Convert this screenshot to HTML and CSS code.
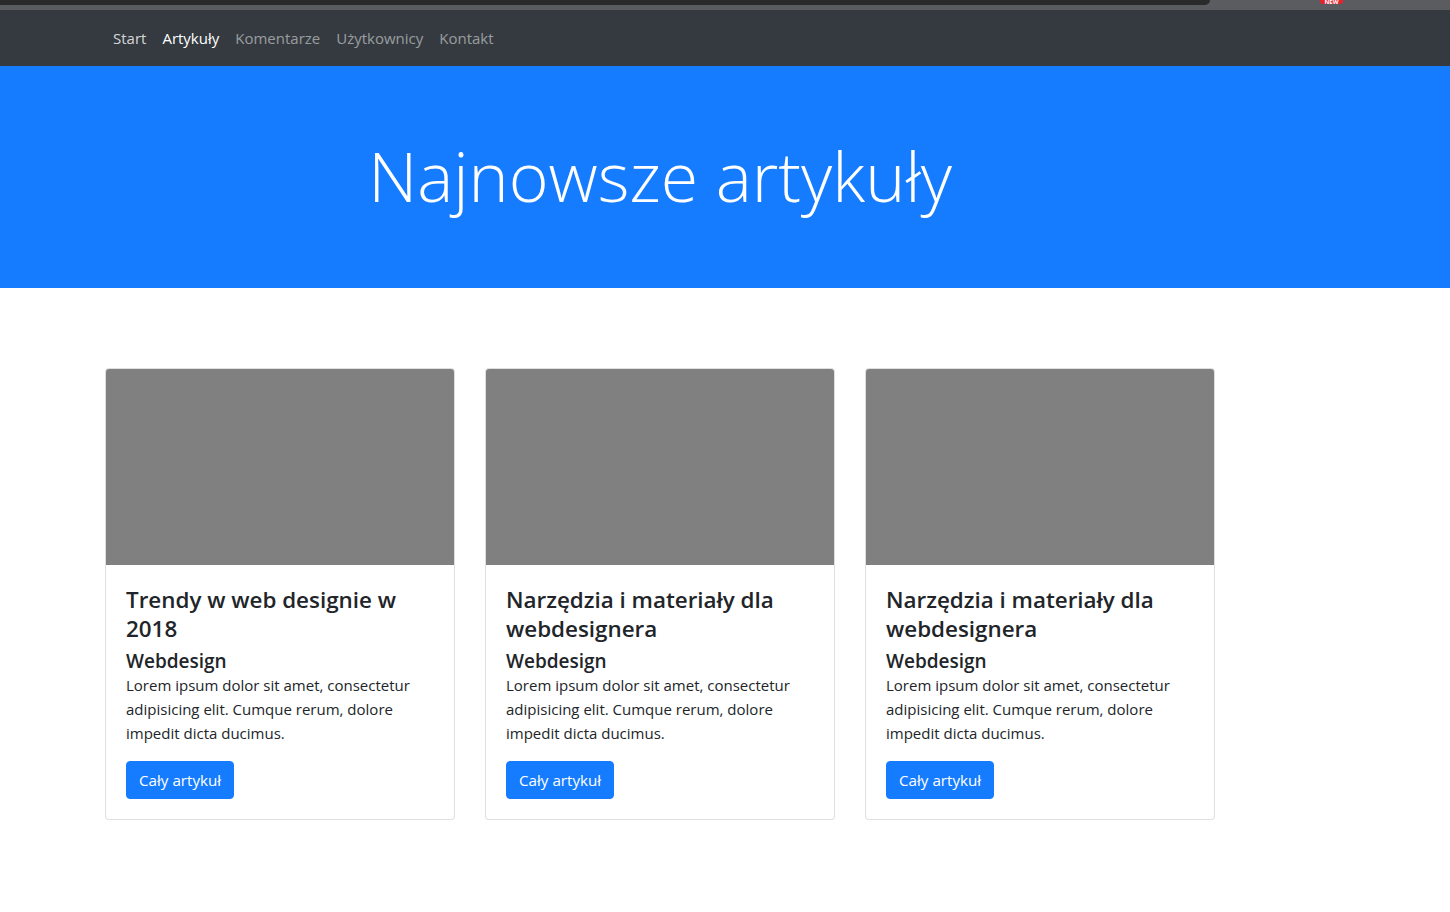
FILE: index.html
```html
<!DOCTYPE html>
<html lang="pl">
<head>
<meta charset="utf-8">
<title>Najnowsze artykuły</title>
<link rel="stylesheet" href="styles.css">
</head>
<body>
<div class="chrome">
  <div class="chrome-tab"></div>
  <span class="chrome-badge">NEW</span>
</div>
<nav class="navbar">
  <div class="container">
    <ul class="nav">
      <li><a class="nav-link nav-start" href="#">Start</a></li>
      <li><a class="nav-link active" href="#">Artykuły</a></li>
      <li><a class="nav-link" href="#">Komentarze</a></li>
      <li><a class="nav-link" href="#">Użytkownicy</a></li>
      <li><a class="nav-link" href="#">Kontakt</a></li>
    </ul>
  </div>
</nav>
<header class="jumbotron">
  <div class="container">
    <h1 class="display">Najnowsze artykuły</h1>
  </div>
</header>
<main class="container cards-wrap">
  <div class="row">
    <div class="card">
      <div class="card-img"></div>
      <div class="card-body">
        <h4 class="card-title">Trendy w web designie w 2018</h4>
        <h5 class="card-subtitle">Webdesign</h5>
        <p class="card-text">Lorem ipsum dolor sit amet, consectetur adipisicing elit. Cumque rerum, dolore impedit dicta ducimus.</p>
        <a class="btn" href="#">Cały artykuł</a>
      </div>
    </div>
    <div class="card">
      <div class="card-img"></div>
      <div class="card-body">
        <h4 class="card-title">Narzędzia i materiały dla webdesignera</h4>
        <h5 class="card-subtitle">Webdesign</h5>
        <p class="card-text">Lorem ipsum dolor sit amet, consectetur adipisicing elit. Cumque rerum, dolore impedit dicta ducimus.</p>
        <a class="btn" href="#">Cały artykuł</a>
      </div>
    </div>
    <div class="card">
      <div class="card-img"></div>
      <div class="card-body">
        <h4 class="card-title">Narzędzia i materiały dla webdesignera</h4>
        <h5 class="card-subtitle">Webdesign</h5>
        <p class="card-text">Lorem ipsum dolor sit amet, consectetur adipisicing elit. Cumque rerum, dolore impedit dicta ducimus.</p>
        <a class="btn" href="#">Cały artykuł</a>
      </div>
    </div>
  </div>
</main>
</body>
</html>
```

FILE: styles.css
```css
* { box-sizing: border-box; }
html, body { margin: 0; padding: 0; }
body {
  font-family: "Open Sans", "Noto Sans", sans-serif;
  font-size: 15px;
  line-height: 1.5;
  color: #212529;
  background: #fff;
  width: 1450px;
}

.chrome {
  position: relative;
  height: 10px;
  background: #5b5c60;
  overflow: hidden;
}
.chrome-tab {
  width: 1210px;
  height: 5px;
  background: #2a2a2a;
  border-bottom-right-radius: 5px;
}
.chrome-badge {
  position: absolute;
  left: 1320px;
  top: 0;
  width: 23px;
  height: 4px;
  background: #e8222d;
  border-radius: 0 0 3px 3px;
  color: #fff;
  font-size: 6px;
  font-weight: 700;
  line-height: 4px;
  text-align: center;
  overflow: hidden;
}

.container {
  width: 1140px;
  margin-left: 90px;
  padding: 0 15px;
}

.navbar {
  background: #343a40;
  padding: 8px 0;
}
.nav {
  display: flex;
  list-style: none;
  margin: 0;
  padding: 0;
}
.nav-link {
  display: block;
  padding: 8px;
  line-height: 24px;
  font-size: 15px;
  color: rgba(255, 255, 255, 0.5);
  text-decoration: none;
}
.nav-link.nav-start { color: rgba(255, 255, 255, 0.8); }
.nav-link.active { color: #fff; }

.jumbotron {
  background: #157bff;
  padding: 64px 0;
  margin-bottom: 32px;
}
.display {
  margin: 3px 0 5px;
  font-size: 68px;
  font-weight: 300;
  line-height: 86px;
  color: #fff;
  text-align: center;
}

.cards-wrap { padding-top: 48px; }
.row {
  display: flex;
  gap: 30px;
}
.card {
  width: 350px;
  border: 1px solid rgba(0, 0, 0, 0.125);
  border-radius: 4px;
  overflow: hidden;
  background: #fff;
}
.card-img {
  height: 196px;
  background: #808080;
}
.card-body { padding: 20px; }
.card-title {
  margin: 0 0 12px;
  font-size: 22.4px;
  font-weight: 600;
  line-height: 29px;
}
.card-subtitle {
  margin: -6px 0 0;
  font-size: 19px;
  font-weight: 600;
  line-height: 24px;
}
.card-text {
  margin: 0 0 16px;
  line-height: 24px;
}
.btn {
  display: inline-block;
  padding: 6px 12px;
  border: 1px solid #157bff;
  border-radius: 4px;
  background: #157bff;
  color: #fff;
  font-size: 15.2px;
  line-height: 24px;
  text-decoration: none;
}
```
